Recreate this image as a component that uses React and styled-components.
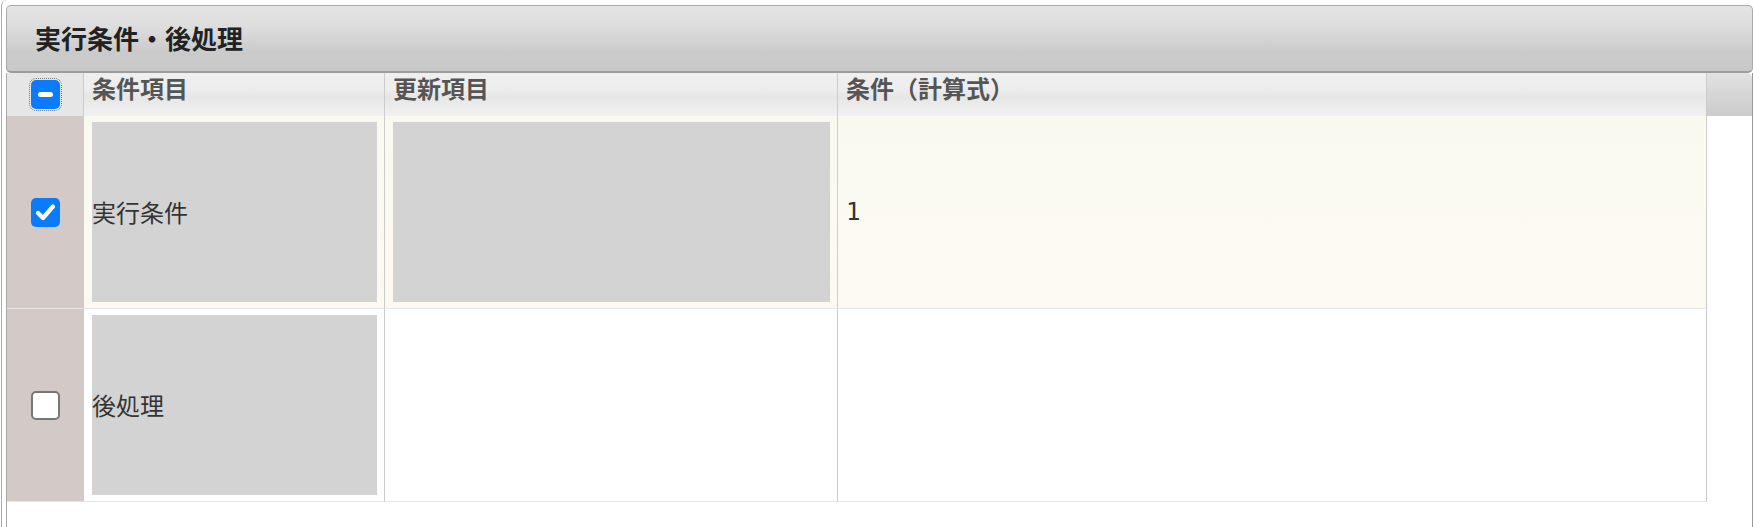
import React from "react";
import styled, { createGlobalStyle } from "styled-components";

const GlobalStyle = createGlobalStyle`
  html, body {
    margin: 0;
    padding: 0;
    background: #fff;
  }
  body {
    font-family: "Noto Sans CJK JP", "Noto Sans", sans-serif;
    color: #333;
  }
`;

const rows = [
  { id: 1, checked: true, item: "実行条件", target: true, formula: "1", active: true },
  { id: 2, checked: false, item: "後処理", target: false, formula: "", active: false },
];

const Checkbox = ({ state, focused }) => (
  <StyledCheckbox state={state} focused={focused}>
    {state === "checked" && (
      <svg width="25" height="25" viewBox="0 0 25 25">
        <path d="M5 13 L10 18 L20 6.5" fill="none" stroke="#fff" strokeWidth="4.2" strokeLinecap="round" strokeLinejoin="round" />
      </svg>
    )}
    {state === "indeterminate" && <StyledDash />}
  </StyledCheckbox>
);

const App = () => {
  return (
    <>
      <GlobalStyle />
      <StyledFrame>
        <StyledTitleBar>実行条件・後処理</StyledTitleBar>
        <StyledPanel>
          <StyledGrid>
            <StyledHeadCheck>
              <Checkbox state="indeterminate" focused />
            </StyledHeadCheck>
            <StyledHeadCell>条件項目</StyledHeadCell>
            <StyledHeadCell>更新項目</StyledHeadCell>
            <StyledHeadCell last>条件（計算式）</StyledHeadCell>

            {rows.map((row) => (
              <React.Fragment key={row.id}>
                <StyledCheckCell>
                  <Checkbox state={row.checked ? "checked" : "unchecked"} />
                </StyledCheckCell>
                <StyledCell active={row.active}>
                  <StyledField>{row.item}</StyledField>
                </StyledCell>
                <StyledCell active={row.active}>
                  {row.target && <StyledField />}
                </StyledCell>
                <StyledCell active={row.active} last>
                  <StyledFormula>{row.formula}</StyledFormula>
                </StyledCell>
              </React.Fragment>
            ))}
          </StyledGrid>
          <StyledGutter>
            <StyledGutterHead />
          </StyledGutter>
        </StyledPanel>
      </StyledFrame>
    </>
  );
};

const StyledFrame = styled.div`
  margin-left: 1px;
  padding: 5px 0 0 4px;
  min-height: 522px;
  border-left: 1px solid #aaa;
  border-top-left-radius: 6px;
  display: flex;
  flex-direction: column;
`;

const StyledTitleBar = styled.div`
  box-sizing: border-box;
  height: 68px;
  width: 1747px;
  padding: 0 0 2px 28px;
  display: flex;
  align-items: center;
  background: linear-gradient(#e4e4e4 0%, #dcdcdc 35%, #cbcbcb 70%, #c8c8c8 100%);
  border: 1px solid #aaa;
  border-bottom: 2px solid #9c9c9c;
  border-radius: 5px;
  font-size: 26px;
  font-weight: 700;
  line-height: 30px;
  color: #222;
`;

const StyledPanel = styled.div`
  flex: 1;
  width: 1747px;
  box-sizing: border-box;
  display: flex;
  border-left: 1px solid #aaa;
  border-right: 1px solid #999;
`;

const StyledGrid = styled.div`
  display: grid;
  grid-template-columns: 76px 301px 453px 870px;
  align-self: flex-start;
`;

const StyledHeadCheck = styled.div`
  height: 43px;
  display: flex;
  justify-content: center;
  align-items: center;
  background: #e6e6e6;
`;

const StyledHeadCell = styled.div`
  box-sizing: border-box;
  height: 43px;
  padding: 0 0 0 8px;
  border-left: 1px solid #ccc;
  border-right: ${(p) => (p.last ? "1px solid #ccc" : "none")};
  background: linear-gradient(#efefef 0%, #ededed 40%, #e6e6e6 55%, #f1f1f1 100%);
  font-size: 24px;
  font-weight: 700;
  line-height: 30px;
  color: #555;
`;

const StyledCheckCell = styled.div`
  display: flex;
  justify-content: center;
  align-items: center;
  background: #d3cac8;
  border-bottom: 1px solid #e6e6e6;
`;

const StyledCell = styled.div`
  box-sizing: border-box;
  height: 193px;
  padding: 6px 7px 6px 8px;
  display: flex;
  align-items: center;
  border-left: 1px solid #ccc;
  border-right: ${(p) => (p.last ? "1px solid #ccc" : "none")};
  border-bottom: 1px solid #e6e6e6;
  background: ${(p) =>
    p.active ? "linear-gradient(#f9f9ef 0%, #fbfaf0 50%, #fdf9f1 100%)" : "#fff"};
`;

const StyledField = styled.div`
  flex: 1;
  align-self: stretch;
  display: flex;
  align-items: center;
  background: #d3d3d3;
  font-size: 24px;
  line-height: 30px;
  color: #333;
`;

const StyledFormula = styled.span`
  font-family: "DejaVu Sans Mono", "Liberation Mono", monospace;
  font-size: 24px;
  color: #333;
`;

const StyledGutter = styled.div`
  flex: 1;
`;

const StyledGutterHead = styled.div`
  height: 43px;
  background: linear-gradient(#e2e2e2 0%, #d8d8d8 40%, #cccccc 100%);
  border-top-right-radius: 5px;
`;

const StyledCheckbox = styled.span`
  box-sizing: border-box;
  width: 29px;
  height: 29px;
  border-radius: 5px;
  display: inline-flex;
  justify-content: center;
  align-items: center;
  background: ${(p) => (p.state === "unchecked" ? "#fff" : "#0a7aff")};
  border: ${(p) => (p.state === "unchecked" ? "2px solid #777" : "none")};
  outline: ${(p) => (p.focused ? "1px dotted #777" : "none")};
  outline-offset: 1px;
`;

const StyledDash = styled.span`
  width: 15px;
  height: 5px;
  border-radius: 3px;
  background: #fff;
`;

export default App;
